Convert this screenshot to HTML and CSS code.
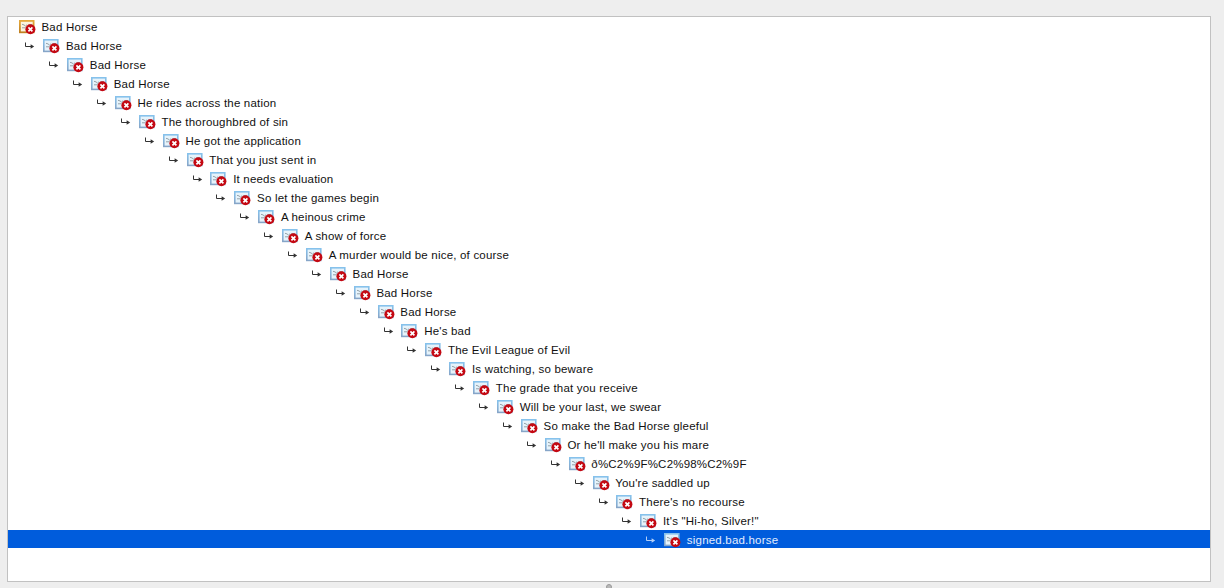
FILE: index.html
```
<!DOCTYPE html>
<html lang="en">
<head>
<meta charset="utf-8">
<title>Certificate chain</title>
<link rel="stylesheet" href="styles.css">
</head>
<body>
<svg class="defs" aria-hidden="true">
  <defs>
    <linearGradient id="gold" x1="0" y1="0" x2="0" y2="1"><stop offset="0" stop-color="#e5a93c"/><stop offset="1" stop-color="#c08022"/></linearGradient>
    <linearGradient id="blue" x1="0" y1="0" x2="0" y2="1"><stop offset="0" stop-color="#86c2ec"/><stop offset="1" stop-color="#86a5c8"/></linearGradient>
    <g id="lines"><path d="M3 4.3l2 .6 1.5 1.2 1.6-1.5M9.5 4.6H13M3 7.8h3.5" fill="none" stroke="#8c989f" stroke-width=".9"/></g>
    <g id="bad"><circle cx="11.4" cy="9.3" r="5" fill="#c40812"/><path d="M9.4 7.3l4 4M13.4 7.3l-4 4" stroke="#fff" stroke-width="1.7"/></g>
    <symbol id="root" viewBox="0 0 17 15"><rect x=".9" y=".9" width="13.7" height="11.4" fill="#fbf3df" stroke="url(#gold)" stroke-width="1.8"/><use href="#lines"/><use href="#bad"/></symbol>
    <symbol id="cert" viewBox="0 0 17 15"><rect x=".8" y=".8" width="14" height="11.6" fill="#e6f3fb" stroke="url(#blue)" stroke-width="1.6"/><use href="#lines"/><use href="#bad"/></symbol>
    <symbol id="arrow" viewBox="0 0 11 8"><path d="M1.5 .5v4H7" fill="none" stroke="currentColor"/><path d="M6.6 2.2L10.2 4.5 6.6 6.8z" fill="currentColor"/></symbol>
  </defs>
</svg>
<main class="panel">
  <div class="row root"><svg class="icon"><use href="#root"/></svg><span class="name">Bad Horse</span></div>
  <div class="row" style="--depth:0"><svg class="arrow"><use href="#arrow"/></svg><svg class="icon"><use href="#cert"/></svg><span class="name">Bad Horse</span></div>
  <div class="row" style="--depth:1"><svg class="arrow"><use href="#arrow"/></svg><svg class="icon"><use href="#cert"/></svg><span class="name">Bad Horse</span></div>
  <div class="row" style="--depth:2"><svg class="arrow"><use href="#arrow"/></svg><svg class="icon"><use href="#cert"/></svg><span class="name">Bad Horse</span></div>
  <div class="row" style="--depth:3"><svg class="arrow"><use href="#arrow"/></svg><svg class="icon"><use href="#cert"/></svg><span class="name">He rides across the nation</span></div>
  <div class="row" style="--depth:4"><svg class="arrow"><use href="#arrow"/></svg><svg class="icon"><use href="#cert"/></svg><span class="name">The thoroughbred of sin</span></div>
  <div class="row" style="--depth:5"><svg class="arrow"><use href="#arrow"/></svg><svg class="icon"><use href="#cert"/></svg><span class="name">He got the application</span></div>
  <div class="row" style="--depth:6"><svg class="arrow"><use href="#arrow"/></svg><svg class="icon"><use href="#cert"/></svg><span class="name">That you just sent in</span></div>
  <div class="row" style="--depth:7"><svg class="arrow"><use href="#arrow"/></svg><svg class="icon"><use href="#cert"/></svg><span class="name">It needs evaluation</span></div>
  <div class="row" style="--depth:8"><svg class="arrow"><use href="#arrow"/></svg><svg class="icon"><use href="#cert"/></svg><span class="name">So let the games begin</span></div>
  <div class="row" style="--depth:9"><svg class="arrow"><use href="#arrow"/></svg><svg class="icon"><use href="#cert"/></svg><span class="name">A heinous crime</span></div>
  <div class="row" style="--depth:10"><svg class="arrow"><use href="#arrow"/></svg><svg class="icon"><use href="#cert"/></svg><span class="name">A show of force</span></div>
  <div class="row" style="--depth:11"><svg class="arrow"><use href="#arrow"/></svg><svg class="icon"><use href="#cert"/></svg><span class="name">A murder would be nice, of course</span></div>
  <div class="row" style="--depth:12"><svg class="arrow"><use href="#arrow"/></svg><svg class="icon"><use href="#cert"/></svg><span class="name">Bad Horse</span></div>
  <div class="row" style="--depth:13"><svg class="arrow"><use href="#arrow"/></svg><svg class="icon"><use href="#cert"/></svg><span class="name">Bad Horse</span></div>
  <div class="row" style="--depth:14"><svg class="arrow"><use href="#arrow"/></svg><svg class="icon"><use href="#cert"/></svg><span class="name">Bad Horse</span></div>
  <div class="row" style="--depth:15"><svg class="arrow"><use href="#arrow"/></svg><svg class="icon"><use href="#cert"/></svg><span class="name">He's bad</span></div>
  <div class="row" style="--depth:16"><svg class="arrow"><use href="#arrow"/></svg><svg class="icon"><use href="#cert"/></svg><span class="name">The Evil League of Evil</span></div>
  <div class="row" style="--depth:17"><svg class="arrow"><use href="#arrow"/></svg><svg class="icon"><use href="#cert"/></svg><span class="name">Is watching, so beware</span></div>
  <div class="row" style="--depth:18"><svg class="arrow"><use href="#arrow"/></svg><svg class="icon"><use href="#cert"/></svg><span class="name">The grade that you receive</span></div>
  <div class="row" style="--depth:19"><svg class="arrow"><use href="#arrow"/></svg><svg class="icon"><use href="#cert"/></svg><span class="name">Will be your last, we swear</span></div>
  <div class="row" style="--depth:20"><svg class="arrow"><use href="#arrow"/></svg><svg class="icon"><use href="#cert"/></svg><span class="name">So make the Bad Horse gleeful</span></div>
  <div class="row" style="--depth:21"><svg class="arrow"><use href="#arrow"/></svg><svg class="icon"><use href="#cert"/></svg><span class="name">Or he'll make you his mare</span></div>
  <div class="row" style="--depth:22"><svg class="arrow"><use href="#arrow"/></svg><svg class="icon"><use href="#cert"/></svg><span class="name">ð%C2%9F%C2%98%C2%9F</span></div>
  <div class="row" style="--depth:23"><svg class="arrow"><use href="#arrow"/></svg><svg class="icon"><use href="#cert"/></svg><span class="name">You're saddled up</span></div>
  <div class="row" style="--depth:24"><svg class="arrow"><use href="#arrow"/></svg><svg class="icon"><use href="#cert"/></svg><span class="name">There's no recourse</span></div>
  <div class="row" style="--depth:25"><svg class="arrow"><use href="#arrow"/></svg><svg class="icon"><use href="#cert"/></svg><span class="name">It's "Hi-ho, Silver!"</span></div>
  <div class="row selected" style="--depth:26"><svg class="arrow"><use href="#arrow"/></svg><svg class="icon"><use href="#cert"/></svg><span class="name">signed.bad.horse</span></div>
</main>
<div class="grip"></div>
</body>
</html>
```
FILE: styles.css
```
* { box-sizing: border-box; }
body {
  margin: 0;
  height: 588px;
  overflow: hidden;
  padding: 16px 13px 0 7px;
  background: #eee;
  color: #111;
  font: 11.5px/18px "Liberation Sans", Arial, sans-serif;
  letter-spacing: .2px;
}
.defs { position: absolute; width: 0; height: 0; }
.panel {
  height: 566px;
  background: #fff;
  border: 1px solid #c1c1c1;
}
.row {
  display: flex;
  height: 18px;
  margin-bottom: 1px;
  padding-left: calc(16.4px + var(--depth) * 23.88px);
  white-space: nowrap;
}
.root { padding-left: 11px; }
.root .name { margin-left: 5.5px; }
.arrow { width: 11px; height: 8px; margin: 6px 7.9px 0 0; flex: none; color: #333; }
.icon { width: 17px; height: 15px; margin-top: 3px; flex: none; }
.name { margin: 1px 0 0 5.7px; }
.selected { background: #005cdc; color: #e3edff; }
.selected .arrow { color: #b5d0f8; }
.grip {
  width: 6px;
  height: 6px;
  margin: 2px 0 0 599px;
  border-radius: 50%;
  border: 1px solid #999;
  background: #b8b8b8;
}
```
